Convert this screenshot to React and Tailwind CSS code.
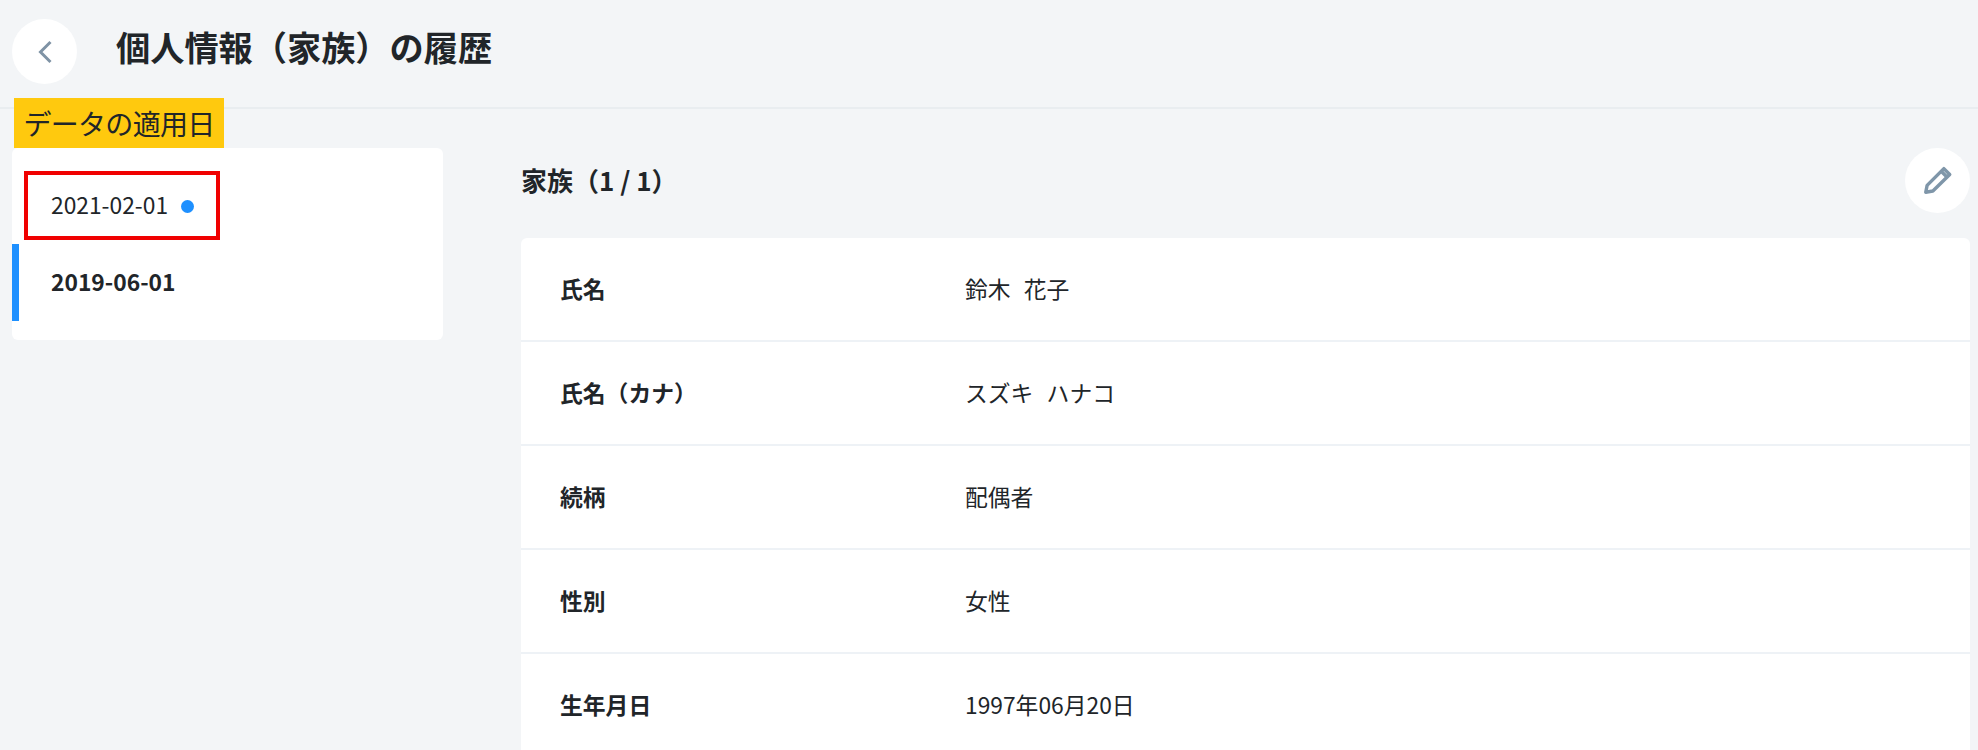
import React from "react";

const rows = [
  ["氏名", "鈴木 花子"],
  ["氏名（カナ）", "スズキ ハナコ"],
  ["続柄", "配偶者"],
  ["性別", "女性"],
  ["生年月日", "1997年06月20日"],
];

export default function App() {
  return (
    <div className="relative h-[750px] overflow-hidden bg-[#f3f5f7] text-[#212529] font-['Noto_Sans_CJK_JP','Noto_Sans',sans-serif]">
      <header className="flex h-[109px] items-center border-b-2 border-[#e9edf0] pb-[4px] pl-3">
        <button className="flex h-[65px] w-[65px] items-center justify-center rounded-full bg-white">
          <svg width="20" height="26" viewBox="0 0 20 26" fill="none" stroke="#7f93a5" strokeWidth="3">
            <path d="M15.5 3 L5.5 13 L15.5 23" />
          </svg>
        </button>
        <h1 className="mb-[10px] ml-[39px] text-[34.2px] font-bold leading-none">個人情報（家族）の履歴</h1>
      </header>

      <div className="absolute left-[14px] top-[98px] flex h-[50px] w-[210px] items-center justify-center bg-[#ffc90e] text-[28px] leading-none tracking-[-0.7px]">
        データの適用日
      </div>

      <main className="flex gap-[78px] pl-3 pr-2 pt-[39px]">
        <aside className="relative h-[192px] w-[431px] rounded-md bg-white py-[19px] text-[22.8px]">
          <div className="flex h-[77px] items-center pl-[39px]">
            <span>2021-02-01</span>
            <span className="ml-[13px] mt-[1px] h-[13px] w-[13px] rounded-full bg-[#1e90ff]" />
          </div>
          <div className="flex h-[77px] items-center border-l-[7px] border-[#1e90ff] pl-[32px] font-bold">
            2019-06-01
          </div>
          <div className="absolute left-[12px] top-[23px] h-[69px] w-[196px] border-4 border-[#f00000]" />
        </aside>

        <section className="w-[1449px]">
          <div className="flex h-[64px] items-center justify-between">
            <h2 className="mb-[2px] text-[26px] font-bold">家族（1 / 1）</h2>
            <button className="flex h-[65px] w-[65px] items-center justify-center rounded-full bg-white">
              <svg width="32" height="32" viewBox="0 0 30 30" fill="none" stroke="#7f96a9" strokeWidth="3.2" strokeLinejoin="round">
                <path d="M3.5 26.5 L4.8 20 L20.5 4.3 L26 9.8 L10.2 25.3 Z" />
                <path d="M18 6.8 L23.2 12" />
              </svg>
            </button>
          </div>
          <div className="mt-[26px] rounded-md bg-white text-[22.8px]">
            {rows.map(([label, value]) => (
              <div key={label} className="flex h-[104px] items-center border-b-2 border-[#eef2f6] pl-[39px]">
                <div className="w-[405px] font-bold">{label}</div>
                <div className="whitespace-pre [word-spacing:1.5px]">{value.replace(" ", "  ")}</div>
              </div>
            ))}
          </div>
        </section>
      </main>
    </div>
  );
}
